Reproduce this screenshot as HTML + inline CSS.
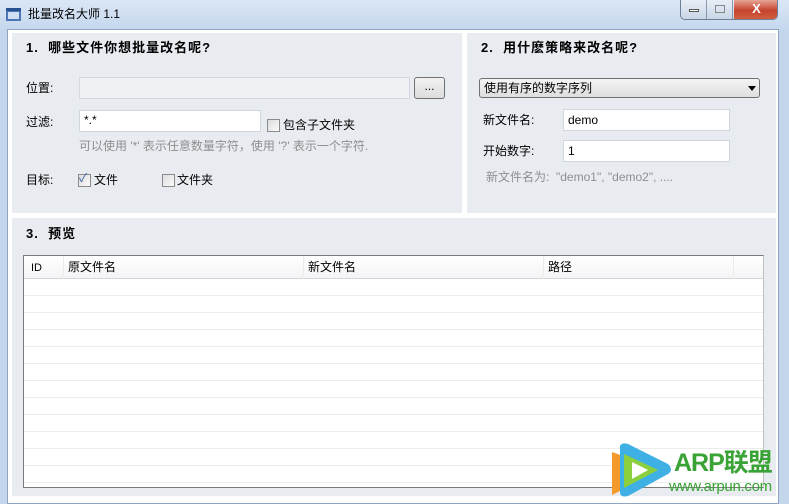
<!DOCTYPE html>
<html><head><meta charset="utf-8"><style>
*{margin:0;padding:0;box-sizing:border-box}
body{width:789px;height:504px;overflow:hidden;background:#c3d6ec;font-family:"Liberation Sans","Noto Sans CJK SC",sans-serif;font-size:12px;line-height:15px;color:#000;position:relative}
.abs{position:absolute}
.title{left:0;top:0;width:789px;height:30px;background:linear-gradient(#dbe7f5,#c4d7ee)}
.client{left:7px;top:29px;width:772px;height:475px;background:#fff;border:1px solid #8ea5c2}
.panel{background:#e8ecf1}
.h{font-weight:bold;font-size:13px;letter-spacing:1px}
.inp{background:#fff;border:1px solid #d0d6dd}
.cb{width:13px;height:13px;border:1px solid #8b8b8b;background:linear-gradient(135deg,#dcdcdc,#fbfbfb)}
.gray{color:#8e8e8e}
</style></head><body>
<div class="abs title"></div>
<svg class="abs" style="left:5px;top:6px" width="18" height="17"><rect x="1" y="2" width="15" height="13" fill="#4a76b8"/><rect x="3" y="6" width="11" height="7" fill="#cfe0f4"/><rect x="1" y="2" width="15" height="3" fill="#26508f"/></svg>
<div class="abs" style="left:28px;top:7px;font-size:12px">批量改名大师 1.1</div>
<div class="abs" style="left:680px;top:0;width:98px;height:20px;border:1px solid #6d7f99;border-top:none;border-radius:0 0 5px 5px;background:linear-gradient(#e8eef6,#c9d6e6);overflow:hidden">
<div class="abs" style="left:0;top:0;width:26px;height:19px;border-right:1px solid #8797ad"></div>
<div class="abs" style="left:8px;top:9px;width:10px;height:3px;border:1px solid #555;background:#fff"></div>
<div class="abs" style="left:27px;top:0;width:25px;height:19px;border-right:1px solid #8797ad"></div>
<div class="abs" style="left:34px;top:5px;width:10px;height:8px;border:1px solid #888"></div>
<div class="abs" style="left:53px;top:0;width:45px;height:19px;background:linear-gradient(#e6a596,#c5432c 55%,#d0603f);color:#fff;font-weight:bold;text-align:center;font-size:13px;line-height:18px">X</div>
</div>
<div class="abs client"></div>
<div class="abs panel" style="left:12px;top:33px;width:450px;height:180px"></div>
<div class="abs panel" style="left:467px;top:33px;width:309px;height:180px"></div>
<div class="abs panel" style="left:12px;top:218px;width:764px;height:278px"></div>

<div class="abs h" style="left:26px;top:40px">1.&nbsp; 哪些文件你想批量改名呢?</div>
<div class="abs" style="left:26px;top:81px">位置:</div>
<div class="abs inp" style="left:79px;top:77px;width:331px;height:22px;background:#eef0f3;border-color:#d4d8de"></div>
<div class="abs" style="left:414px;top:77px;width:31px;height:22px;border:1px solid #707070;border-radius:3px;background:linear-gradient(#f2f2f2,#dcdcdc);text-align:center;line-height:16px">...</div>
<div class="abs" style="left:26px;top:115px">过滤:</div>
<div class="abs inp" style="left:79px;top:110px;width:182px;height:22px;padding:2px 4px">*.*</div>
<div class="abs cb" style="left:267px;top:119px"></div>
<div class="abs" style="left:283px;top:118px">包含子文件夹</div>
<div class="abs gray" style="left:79px;top:139px">可以使用 '*' 表示任意数量字符，使用 '?' 表示一个字符.</div>
<div class="abs" style="left:26px;top:173px">目标:</div>
<div class="abs cb" style="left:78px;top:174px"></div>
<div class="abs" style="left:79px;top:171px;color:#3b5fa8;font-size:12px">✓</div>
<div class="abs" style="left:94px;top:173px">文件</div>
<div class="abs cb" style="left:162px;top:174px"></div>
<div class="abs" style="left:177px;top:173px">文件夹</div>

<div class="abs h" style="left:481px;top:40px">2.&nbsp; 用什麽策略来改名呢?</div>
<div class="abs" style="left:479px;top:78px;width:281px;height:20px;border:1px solid #707070;border-radius:3px;background:linear-gradient(#f4f4f4,#dedede);padding:2px 4px">使用有序的数字序列</div>
<div class="abs" style="left:748px;top:86px;width:0;height:0;border-left:4px solid transparent;border-right:4px solid transparent;border-top:5px solid #000"></div>
<div class="abs" style="left:483px;top:113px">新文件名:</div>
<div class="abs inp" style="left:563px;top:109px;width:167px;height:22px;padding:3px 4px">demo</div>
<div class="abs" style="left:483px;top:144px">开始数字:</div>
<div class="abs inp" style="left:563px;top:140px;width:167px;height:22px;padding:3px 4px">1</div>
<div class="abs gray" style="left:486px;top:170px">新文件名为: &nbsp;"demo1", "demo2", ....</div>

<div class="abs h" style="left:26px;top:226px">3.&nbsp; 预览</div>
<div class="abs" style="left:23px;top:255px;width:741px;height:233px;border:1px solid #7a7a7a;border-right-color:#c0c0c0;background:#fff;overflow:hidden">
<div class="abs" style="left:0;top:0;width:740px;height:23px;background:linear-gradient(#fff,#f3f4f6);border-bottom:1px solid #d5d5d5"></div>
<div class="abs" style="left:7px;top:5px;font-size:11px">ID</div>
<div class="abs" style="left:44px;top:4px">原文件名</div>
<div class="abs" style="left:284px;top:4px">新文件名</div>
<div class="abs" style="left:524px;top:4px">路径</div>
<div class="abs" style="left:39px;top:0;width:1px;height:233px;background:#ececec"></div>
<div class="abs" style="left:279px;top:0;width:1px;height:233px;background:#ececec"></div>
<div class="abs" style="left:519px;top:0;width:1px;height:233px;background:#ececec"></div>
<div class="abs" style="left:709px;top:0;width:1px;height:233px;background:#ececec"></div>
<div class="abs" style="left:0;top:23px;width:740px;height:210px;background:repeating-linear-gradient(#fff 0 16px,#ececec 16px 17px)"></div>
</div>

<svg class="abs" style="left:602px;top:440px" width="70" height="62"><path d="M10 12 L60 30 L10 55 Z" fill="#f39a2a"/><path d="M18 6 Q20 2 26 4 L66 24 Q72 30 66 34 L26 56 Q18 58 18 52 Z" fill="#3fb0e4"/><path d="M22 14 L56 30 L22 48 Z" fill="#8ccf3c"/><path d="M30 22 L46 30 L30 39 Z" fill="#fff"/></svg>
<div class="abs" style="left:674px;top:449px;font-size:25px;line-height:28px;font-weight:bold;color:#3aa335;letter-spacing:-1px">ARP联盟</div>
<div class="abs" style="left:669px;top:478px;font-size:15px;line-height:17px;color:#3aa335;letter-spacing:-0.3px">www.arpun.com</div>
</body></html>
